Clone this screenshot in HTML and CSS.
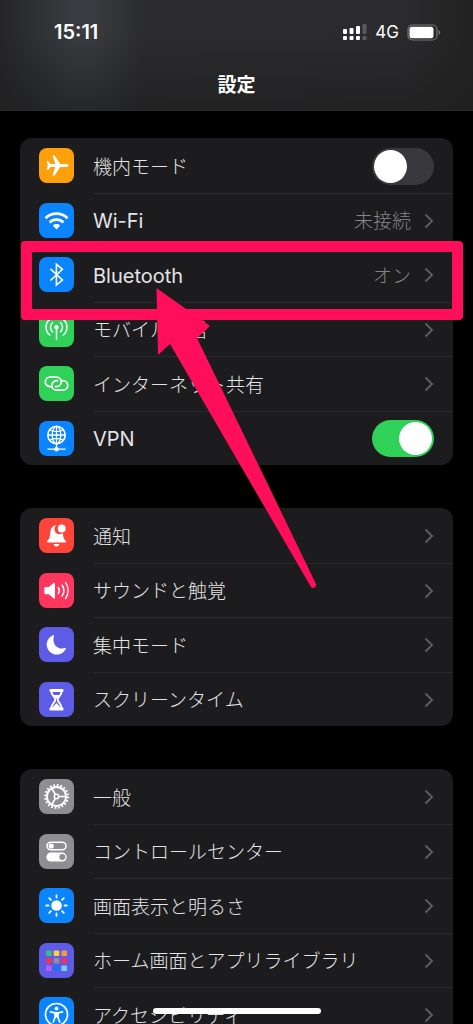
FILE: index.html
```html
<!DOCTYPE html>
<html lang="ja">
<head>
<meta charset="utf-8">
<meta name="viewport" content="width=device-width, initial-scale=1">
<title>設定</title>
<link rel="stylesheet" href="styles.css">
</head>
<body>
<div class="screen">
  <header class="header">
    <div class="status">
      <span class="time">15:11</span>
      <div class="status-right">
        <svg class="signal" width="24" height="17" viewBox="0 0 24 17" fill="#fff">
          <rect x="0" y="5" width="4" height="5" rx="1"/><rect x="6.500" y="4" width="4" height="6" rx="1"/><rect x="13" y="2" width="4" height="8" rx="1"/><rect x="19.500" y="0" width="4" height="10" rx="1" fill="#5a5a5c"/>
          <rect x="0" y="12" width="4" height="4" rx="1"/><rect x="6.500" y="12" width="4" height="4" rx="1"/><rect x="13" y="12" width="4" height="4" rx="1"/><rect x="19.500" y="12" width="4" height="4" rx="1" fill="#5a5a5c"/>
        </svg>
        <span class="network">4G</span>
        <svg class="battery" width="34" height="17" viewBox="0 0 34 17">
          <rect x="1" y="1" width="29" height="15" rx="4.500" fill="none" stroke="#77777a" stroke-width="1.200"/>
          <rect x="2.500" y="2.700" width="24" height="11.600" rx="2.500" fill="#fff"/>
          <path d="M31.600 6v5q1.600-.8 1.600-2.500T31.600 6z" fill="#77777a"/>
        </svg>
      </div>
    </div>
    <h1 class="title">設定</h1>
  </header>

  <main class="groups">
    <ul class="group">
      <li class="item">
        <div class="row">
          <svg class="icon orange" viewBox="0 0 35 35"><path fill="#fff" d="M29.500 17.500c0-1-1.500-1.500-3-1.500h-5.200L15.600 7.600h-2.200l2.900 8.400h-4.800l-2.300-2.900H7.600l1.100 4.400-1.100 4.400h1.600l2.300-2.900h4.800l-2.900 8.400h2.200l5.700-8.400h5.200c1.500 0 3-.5 3-1.500z"/></svg>
          <div class="body"><label class="label" for="airplane">機内モード</label><input class="switch" type="checkbox" role="switch" id="airplane"></div>
        </div>
      </li>
      <li class="item">
        <a class="row" href="#wifi">
          <svg class="icon blue" viewBox="0 0 35 35"><g fill="none" stroke="#fff" stroke-width="2.700"><path d="M6.500 15.200a15.700 15.700 0 0 1 22 0"/><path d="M10.600 19.400a10 10 0 0 1 13.800 0"/></g><path fill="#fff" d="M13.800 22.500a5.400 5.400 0 0 1 7.400 0L17.500 26.400z"/></svg>
          <span class="body"><span class="label latin">Wi-Fi</span><span class="value">未接続</span><svg class="chevron" viewBox="0 0 10 16"><path d="M1.500 1.500 8 8l-6.500 6.500"/></svg></span>
        </a>
      </li>
      <li class="item marked">
        <a class="row" href="#bluetooth">
          <svg class="icon blue" viewBox="0 0 35 35"><path fill="none" stroke="#fff" stroke-width="1.600" d="m11.400 11.800 12 11.200-6 5V7.300l6 5-12 11.200"/></svg>
          <span class="body"><span class="label latin">Bluetooth</span><span class="value">オン</span><svg class="chevron" viewBox="0 0 10 16"><path d="M1.500 1.500 8 8l-6.500 6.500"/></svg></span>
        </a>
        <span class="highlight"></span>
        <svg class="arrow" width="162" height="304" viewBox="0 0 162 304"><path d="M-.5 0 53 38l-13 12 119 246a3 3 0 0 1-5 3L13 56 1 67z" fill="#ff0f5b"/></svg>
      </li>
      <li class="item">
        <a class="row" href="#mobile">
          <svg class="icon green" viewBox="0 0 35 35"><circle cx="17.500" cy="15.200" r="2.200" fill="#fff"/><g fill="none" stroke="#fff" stroke-width="1.500" stroke-linecap="round"><path d="M17.500 16v11.500M13.600 19.800a6 6 0 0 1 0-9.200M21.400 19.800a6 6 0 0 0 0-9.200M10.800 23a10 10 0 0 1 0-15.600M24.200 23a10 10 0 0 0 0-15.600"/></g></svg>
          <span class="body"><span class="label">モバイル通信</span><svg class="chevron" viewBox="0 0 10 16"><path d="M1.500 1.500 8 8l-6.500 6.500"/></svg></span>
        </a>
      </li>
      <li class="item">
        <a class="row" href="#hotspot">
          <svg class="icon green" viewBox="0 0 35 35"><g fill="none" stroke="#fff" stroke-width="1.700" stroke-linecap="round"><path d="M13 20.600h-2a4.700 4.700 0 0 1 0-9.400h6.500a4.700 4.700 0 0 1 0 9.400h-1"/><path d="M22 14.700h2a4.700 4.700 0 0 1 0 9.400h-6.500a4.700 4.700 0 0 1 0-9.400h1"/></g></svg>
          <span class="body"><span class="label">インターネット共有</span><svg class="chevron" viewBox="0 0 10 16"><path d="M1.500 1.500 8 8l-6.500 6.500"/></svg></span>
        </a>
      </li>
      <li class="item">
        <div class="row">
          <svg class="icon blue" viewBox="0 0 35 35"><g fill="none" stroke="#fff" stroke-width="1.300"><circle cx="17.500" cy="14" r="8.700" stroke-width="1.600"/><ellipse cx="17.500" cy="14" rx="4.300" ry="8.700"/><path d="M17.500 5.300v22M8.800 14h17.400M10.700 9q6.800 3.300 13.600 0M10.700 19q6.800-3.300 13.600 0M8.500 28.200h18" /></g><circle cx="17.500" cy="28.200" r="2.300" fill="#fff"/></svg>
          <div class="body"><label class="label latin" for="vpn">VPN</label><input class="switch" type="checkbox" role="switch" id="vpn" checked></div>
        </div>
      </li>
    </ul>

    <ul class="group">
      <li class="item">
        <a class="row" href="#notifications">
          <svg class="icon red" viewBox="0 0 35 35"><path fill="#fff" d="M17.300 7.200c-4 .4-5.700 3.200-6 7.200-.2 3.600-.5 6-2.700 8.200-1 1-.8 2 .6 2h16.600c1.400 0 1.600-1 .6-2-1.700-1.700-2.300-3.500-2.600-7.500a4.900 4.900 0 0 1-6.500-7.900zM14.500 26h6q-.8 2.600-3 2.600T14.500 26z"/><circle cx="22.700" cy="10.500" r="3.900" fill="#fff"/></svg>
          <span class="body"><span class="label">通知</span><svg class="chevron" viewBox="0 0 10 16"><path d="M1.500 1.500 8 8l-6.500 6.500"/></svg></span>
        </a>
      </li>
      <li class="item">
        <a class="row" href="#sounds">
          <svg class="icon pink" viewBox="0 0 35 35"><path fill="#fff" d="M5.300 15.600c0-1 .5-1.500 1.500-1.500h3l4.700-4c.8-.6 1.500-.4 1.500.6v14c0 1-.7 1.200-1.500.6l-4.700-4h-3c-1 0-1.500-.5-1.500-1.500z"/><g fill="none" stroke="#fff" stroke-width="1.500" stroke-linecap="round"><path d="M19.300 14.500a6 6 0 0 1 0 6.200M23 12a10 10 0 0 1 0 11.200M26.600 9.700a14 14 0 0 1 0 15.800"/></g></svg>
          <span class="body"><span class="label">サウンドと触覚</span><svg class="chevron" viewBox="0 0 10 16"><path d="M1.500 1.500 8 8l-6.500 6.500"/></svg></span>
        </a>
      </li>
      <li class="item">
        <a class="row" href="#focus">
          <svg class="icon indigo" viewBox="0 0 35 35"><path fill="#fff" d="M14.200 8.200c.6-.3 1 0 .8.600-2.400 8 3.200 14.500 11 12.300.7-.2 1 .2.700.800A10 10 0 1 1 14.200 8.200z"/></svg>
          <span class="body"><span class="label">集中モード</span><svg class="chevron" viewBox="0 0 10 16"><path d="M1.500 1.500 8 8l-6.500 6.500"/></svg></span>
        </a>
      </li>
      <li class="item">
        <a class="row" href="#screentime">
          <svg class="icon indigo" viewBox="0 0 35 35"><path fill="none" stroke="#fff" stroke-width="1.900" stroke-linejoin="round" d="M12.300 9c0 4.500 4 6 4 8.700s-4 4.200-4 8.700h10.400c0-4.500-4-6-4-8.700s4-4.200 4-8.700"/><path fill="#fff" d="M11.500 6.900h12a1 1 0 0 1 1 1V9a1 1 0 0 1-1 1h-12a1 1 0 0 1-1-1V7.900a1 1 0 0 1 1-1zM11.500 25.500h12a1 1 0 0 1 1 1v1.100a1 1 0 0 1-1 1h-12a1 1 0 0 1-1-1v-1.100a1 1 0 0 1 1-1zM13.800 13h7.400l-3.700 4zM17.500 21l4 4.500h-8z"/></svg>
          <span class="body"><span class="label">スクリーンタイム</span><svg class="chevron" viewBox="0 0 10 16"><path d="M1.500 1.500 8 8l-6.500 6.500"/></svg></span>
        </a>
      </li>
    </ul>

    <ul class="group">
      <li class="item">
        <a class="row" href="#general">
          <svg class="icon gray" viewBox="0 0 35 35"><g fill="none" stroke="#fff"><circle cx="17.500" cy="17.500" r="11.400" stroke-width="2" stroke-dasharray="1.790 1.790"/><circle cx="17.500" cy="17.500" r="9.600" stroke-width="2"/><circle cx="17.500" cy="17.500" r="2.200" stroke-width="1.500"/><path stroke-width="1.700" d="M19.700 17.500h7.400M16.400 15.600l-3.700-6.400M16.400 19.400l-3.700 6.400"/></g></svg>
          <span class="body"><span class="label">一般</span><svg class="chevron" viewBox="0 0 10 16"><path d="M1.500 1.500 8 8l-6.500 6.500"/></svg></span>
        </a>
      </li>
      <li class="item">
        <a class="row" href="#control">
          <svg class="icon gray" viewBox="0 0 35 35"><rect x="8" y="8.200" width="19" height="7.600" rx="3.800" fill="none" stroke="#fff" stroke-width="1.500"/><circle cx="12.200" cy="12" r="2.600" fill="#fff"/><rect x="7.300" y="18.600" width="20.400" height="9" rx="4.500" fill="#fff"/><circle cx="23.300" cy="23.100" r="3" fill="#8e8e93"/></svg>
          <span class="body"><span class="label">コントロールセンター</span><svg class="chevron" viewBox="0 0 10 16"><path d="M1.500 1.500 8 8l-6.500 6.500"/></svg></span>
        </a>
      </li>
      <li class="item">
        <a class="row" href="#display">
          <svg class="icon blue" viewBox="0 0 35 35"><circle cx="17.500" cy="17.500" r="5.300" fill="#fff"/><path fill="none" stroke="#fff" stroke-width="1.800" stroke-linecap="round" d="M17.500 7.200v2.300M17.500 25.500v2.300M7.200 17.500h2.300M25.500 17.500h2.300M10.200 10.200l1.700 1.700M23.100 23.100l1.700 1.700M10.200 24.800l1.700-1.700M23.100 11.900l1.700-1.700"/></svg>
          <span class="body"><span class="label">画面表示と明るさ</span><svg class="chevron" viewBox="0 0 10 16"><path d="M1.500 1.500 8 8l-6.500 6.500"/></svg></span>
        </a>
      </li>
      <li class="item">
        <a class="row" href="#home">
          <svg class="icon indigo" viewBox="0 0 35 35"><rect x="7" y="7.500" width="5.600" height="5.600" rx="1" fill="#34c17b"/><rect x="14.700" y="7.500" width="5.600" height="5.600" rx="1" fill="#ffcf3a"/><rect x="22.400" y="7.500" width="5.600" height="5.600" rx="1" fill="#f19a38"/><rect x="7" y="15" width="5.600" height="5.600" rx="1" fill="#f0374e"/><rect x="14.700" y="15" width="5.600" height="5.600" rx="1" fill="#8e8e93"/><rect x="22.400" y="15" width="5.600" height="5.600" rx="1" fill="#f5315f"/><rect x="7" y="22.500" width="5.600" height="5.600" rx="1" fill="#bf5af2"/><rect x="14.700" y="22.500" width="5.600" height="5.600" rx="1" fill="#1677f5"/><rect x="22.400" y="22.500" width="5.600" height="5.600" rx="1" fill="#6fd5f7"/></svg>
          <span class="body"><span class="label">ホーム画面とアプリライブラリ</span><svg class="chevron" viewBox="0 0 10 16"><path d="M1.500 1.500 8 8l-6.500 6.500"/></svg></span>
        </a>
      </li>
      <li class="item">
        <a class="row" href="#accessibility">
          <svg class="icon blue" viewBox="0 0 35 35"><circle cx="17.500" cy="17.500" r="11" fill="none" stroke="#fff" stroke-width="1.700"/><circle cx="17.500" cy="11.500" r="1.900" fill="#fff"/><path fill="none" stroke="#fff" stroke-width="1.700" stroke-linecap="round" stroke-linejoin="round" d="m11.500 14.800 4.500 1h3l4.500-1M16.200 16v4l-1.900 5M18.800 16v4l1.900 5"/><path fill="#fff" d="M15.500 15.500h4v5h-4z"/></svg>
          <span class="body"><span class="label">アクセシビリティ</span><svg class="chevron" viewBox="0 0 10 16"><path d="M1.500 1.500 8 8l-6.500 6.500"/></svg></span>
        </a>
      </li>
    </ul>
  </main>
  <div class="home-bar"></div>
</div>
</body>
</html>
```
FILE: styles.css
```css
* { box-sizing: border-box; }

body {
  margin: 0;
  background: #000;
  color: #e4e4e6;
  font-family: Inter, "Noto Sans CJK JP Light", "Noto Sans CJK JP", sans-serif;
  font-size: 19px;
}

.screen {
  position: relative;
  height: 100vh;
  overflow: hidden;
}

.header {
  padding: 19px 32px 10px 54px;
  color: #fff;
  background:
    linear-gradient(to bottom, rgba(30, 30, 31, 0) 30%, rgba(30, 30, 31, 0.7)),
    linear-gradient(to right, #252526, #383b3f 15%, #383b3f 20%, #2c2c2e 30%, #2b2b2d 85%, #222223);
  border-bottom: 1px solid #2a2a2b;
}

.status {
  display: flex;
  align-items: center;
  justify-content: space-between;
  height: 26px;
}

.time { font-size: 20px; font-weight: 600; }

.status-right { display: flex; align-items: center; }

.network {
  margin: 0 8px;
  font-size: 17px;
}

.title {
  margin: 27px 22px 0 0;
  font-family: Inter, "Noto Sans CJK JP", sans-serif;
  font-size: 19px;
  line-height: 28px;
  font-weight: 700;
  text-align: center;
}

.groups {
  display: flex;
  flex-direction: column;
  gap: 43px;
  padding: 27px 20px 0;
}

.group {
  margin: 0;
  padding: 0;
  list-style: none;
  background: #1c1c1e;
  border-radius: 12px;
}

.item { height: 55px; }
.item:nth-child(even) { height: 54px; }

.row {
  display: flex;
  align-items: center;
  gap: 19px;
  height: 100%;
  padding-left: 19px;
  color: inherit;
  text-decoration: none;
}

.icon {
  flex: none;
  width: 35px;
  height: 35px;
  border-radius: 8px;
}

.orange { background: #ff9f0a; }
.blue { background: #0a84ff; }
.green { background: #30d158; }
.red { background: #ff453a; }
.pink { background: #ff375f; }
.indigo { background: #5e5ce6; }
.gray { background: #8e8e93; }

.body {
  display: flex;
  flex: 1;
  align-items: center;
  height: 100%;
  padding-right: 19px;
  border-top: 1px solid #29292b;
}

.item:first-child .body { border-top-color: transparent; }

.label {
  flex: 1;
  padding-bottom: 2px;
}

.latin {
  padding: 1px 0 0;
  font-size: 20px;
}

.value {
  margin-right: 13px;
  padding-bottom: 2px;
  color: #848489;
}

.chevron {
  width: 10px;
  height: 16px;
  fill: none;
  stroke: #5c5c60;
  stroke-width: 2;
}

.switch {
  appearance: none;
  width: 62px;
  height: 37px;
  margin: 0;
  padding: 2px;
  display: flex;
  border-radius: 19px;
  background: #39393d;
}

.switch::before {
  content: "";
  width: 33px;
  height: 33px;
  border-radius: 50%;
  background: #fff;
}

.switch:checked {
  justify-content: flex-end;
  background: #30d158;
}

.marked { position: relative; z-index: 1; }

.highlight {
  position: absolute;
  inset: -6px -10px -18px 1px;
  border: 11px solid #ff0f5b;
  border-radius: 4px;
  pointer-events: none;
}

.arrow {
  position: absolute;
  left: 137px;
  top: 41px;
  overflow: visible;
  pointer-events: none;
}

.home-bar {
  position: absolute;
  bottom: 10px;
  left: 50%;
  width: 168px;
  height: 6px;
  border-radius: 3px;
  background: #fff;
  transform: translateX(-50%);
}
```
